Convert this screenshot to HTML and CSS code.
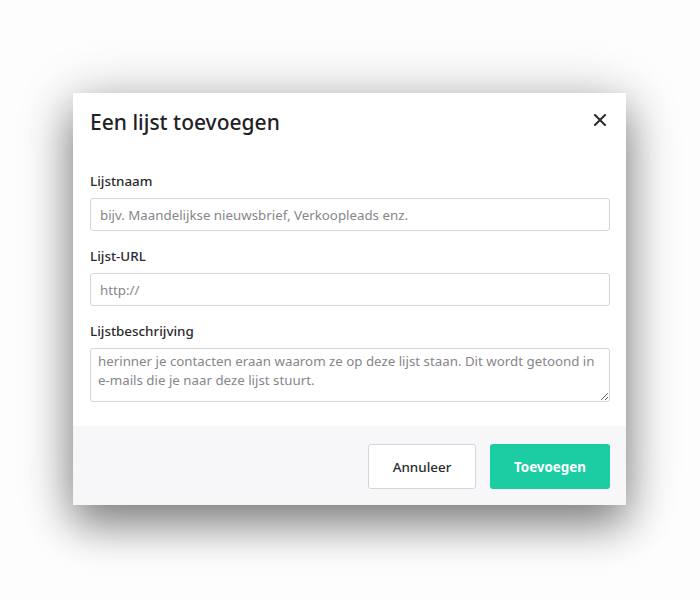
FILE: index.html
```html
<!DOCTYPE html>
<html lang="nl">
<head>
    <meta charset="UTF-8">
    <meta name="viewport" content="width=device-width, initial-scale=1.0">
    <title>Een lijst toevoegen</title>
    <link rel="stylesheet" href="styles.css">
</head>
<body>

    <!-- Modal -->
    <div class="modal">
        <div class="modal-header">
            <h1>Een lijst toevoegen</h1>
            <button class="close" aria-label="Sluiten">
                <svg width="12" height="12" viewBox="0 0 12 12">
                    <path d="M1 1 L11 11 M11 1 L1 11" stroke="#2b2b2e" stroke-width="2" stroke-linecap="square"/>
                </svg>
            </button>
        </div>

        <div class="modal-body">
            <label for="naam">Lijstnaam</label>
            <input id="naam" type="text" placeholder="bijv. Maandelijkse nieuwsbrief, Verkoopleads enz.">

            <label for="url">Lijst-URL</label>
            <input id="url" type="text" placeholder="http://">

            <label for="beschrijving">Lijstbeschrijving</label>
            <textarea id="beschrijving" placeholder="herinner je contacten eraan waarom ze op deze lijst staan. Dit wordt getoond in e-mails die je naar deze lijst stuurt."></textarea>
        </div>

        <div class="modal-footer">
            <button class="btn btn-cancel">Annuleer</button>
            <button class="btn btn-primary">Toevoegen</button>
        </div>
    </div>

</body>
</html>
```

FILE: styles.css
```css
/* General Page Styling */
body {
    margin: 0;
    padding: 93px 0 0 73px;
    min-height: 100vh;
    box-sizing: border-box;
    background: #fdfdfd;
    color: #2b2b2e;
    font-family: 'Noto Sans', sans-serif;
}

/* Modal */
.modal {
    width: 553px;
    background: white;
    box-shadow: 0 20px 40px rgba(0, 0, 0, 0.42), 0 4px 55px rgba(0, 0, 0, 0.2);
}

.modal-header {
    display: flex;
    justify-content: space-between;
    align-items: center;
    padding: 13px 20px 0 17px;
}

h1 {
    margin: 0;
    font-size: 21px;
    font-weight: 500;
    line-height: 32px;
    color: #222226;
}

.close {
    border: none;
    background: none;
    padding: 0;
    width: 12px;
    height: 12px;
    display: flex;
    margin-top: -4px;
    cursor: pointer;
}

.modal-body {
    display: flex;
    flex-direction: column;
    padding: 33px 16px 24px 17px;
}

label {
    font-size: 13.4px;
    font-weight: 500;
    line-height: 20px;
    margin-bottom: 7px;
}

input,
textarea {
    font-family: 'Noto Sans', sans-serif;
    font-size: 13.3px;
    color: #2b2b2e;
    border: 1px solid #d6d6d9;
    border-radius: 3px;
    box-sizing: border-box;
    margin: 0 0 15px;
}

input {
    height: 33px;
    padding: 0 9px;
}

textarea {
    height: 54px;
    padding: 3px 7px;
    line-height: 19px;
    margin-bottom: 0;
    resize: vertical;
}

::placeholder {
    color: #86868b;
}

/* Footer */
.modal-footer {
    display: flex;
    justify-content: flex-end;
    gap: 14px;
    padding: 18px 16px 16px;
    background: #f7f7f9;
}

.btn {
    font-family: 'Noto Sans', sans-serif;
    font-size: 13.4px;
    height: 45px;
    border-radius: 3px;
    cursor: pointer;
}

.btn-cancel {
    width: 108px;
    background: white;
    color: #2b2b2e;
    border: 1px solid #d6d6d9;
    font-weight: 500;
}

.btn-primary {
    width: 120px;
    background: #1ccca3;
    color: white;
    border: none;
    font-weight: 700;
}
```
